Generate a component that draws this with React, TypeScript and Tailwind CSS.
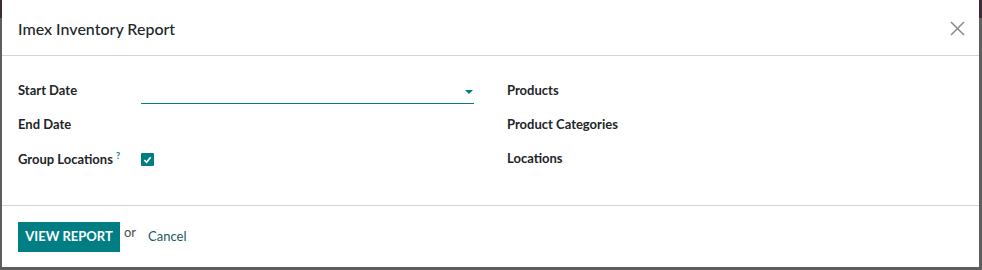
const font = "font-['Lato','Noto_Sans',sans-serif]";

function Field({ label, help, children }: { label: string; help?: boolean; children?: React.ReactNode }) {
  return (
    <div className="flex items-center h-[34px]">
      <div className="w-[123px] shrink-0 text-[13px] font-bold text-[#212529] whitespace-nowrap">
        {label}
        {help && <span className="ml-[3px] align-super text-[9px] text-[#017e84] font-bold">?</span>}
      </div>
      <div className="flex-1 flex items-center">{children}</div>
    </div>
  );
}

export default function App() {
  return (
    <div className={`w-[982px] h-[270px] pl-[2px] pr-[3px] pb-[3px] bg-[linear-gradient(#3b2c36_0_18px,#5e5e5e_18px)] ${font}`}>
      <div className="bg-white h-full flex flex-col">
        <div className="h-[56px] shrink-0 pl-[16px] pr-[14px] pt-[2px] flex items-center justify-between border-b border-[#d4d4d8]">
          <h1 className="text-[16px] font-medium text-[#212529]">Imex Inventory Report</h1>
          <button className="w-[15px] h-[15px]">
            <svg width="15" height="15" viewBox="0 0 15 15">
              <path d="M1 1 L14 14 M14 1 L1 14" stroke="#8a8a8a" strokeWidth="1.5" />
            </svg>
          </button>
        </div>

        <div className="flex-1 px-[16px] pt-[18px] flex gap-[33px]">
          <div className="w-[456px]">
            <Field label="Start Date">
              <div className="w-full h-[22px] mt-[3px] border-b border-[#017e84] flex items-center justify-end pr-[1px]">
                <div className="w-0 h-0 border-l-[4px] border-r-[4px] border-t-[4px] border-l-transparent border-r-transparent border-t-[#017e84]" />
              </div>
            </Field>
            <Field label="End Date" />
            <Field label="Group Locations" help>
              <div className="w-[13px] h-[13px] bg-[#017e84] rounded-[1px] flex items-center justify-center">
                <svg width="9" height="9" viewBox="0 0 10 10">
                  <path d="M1.5 5.5 L4 8 L8.5 2.5" stroke="white" strokeWidth="1.8" fill="none" />
                </svg>
              </div>
            </Field>
          </div>
          <div className="flex-1">
            <Field label="Products" />
            <Field label="Product Categories" />
            <Field label="Locations" />
          </div>
        </div>

        <div className="h-[62px] shrink-0 border-t border-[#d4d4d8] px-[16px] pt-[16px] flex items-start">
          <button className="h-[30px] w-[102px] bg-[#017e84] text-white text-[13px] font-bold uppercase">
            View Report
          </button>
          <span className="ml-[4px] mt-[1px] text-[13px] text-[#4c4c4c]">or</span>
          <button className="ml-[12px] h-[30px] text-[13px] text-[#1a5a62]">Cancel</button>
        </div>
      </div>
    </div>
  );
}
